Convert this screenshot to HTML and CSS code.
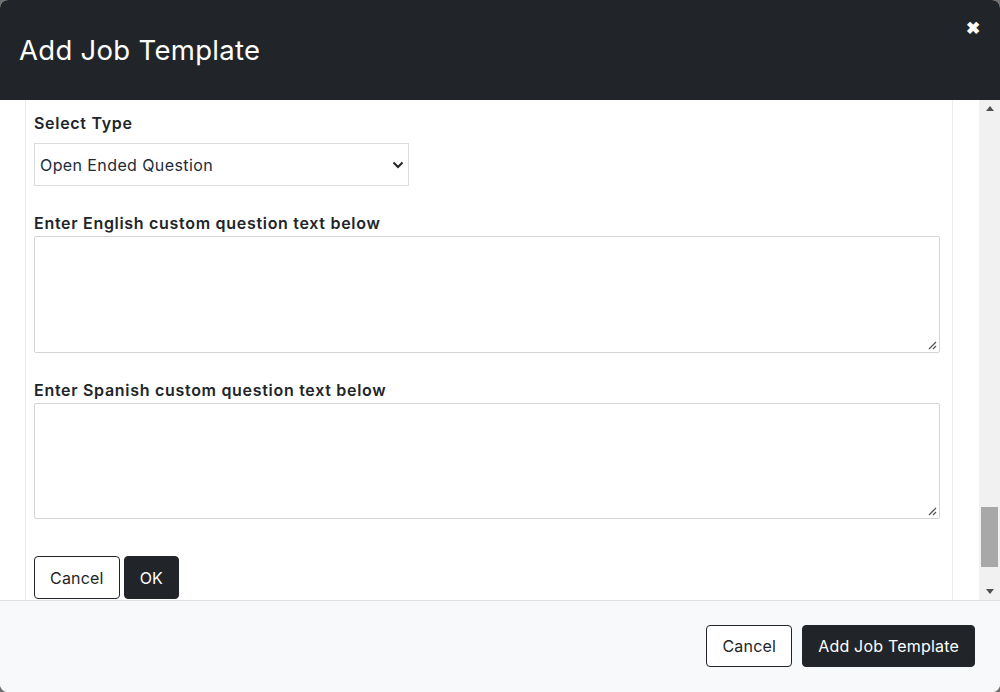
FILE: index.html
```html
<!DOCTYPE html>
<html lang="en">
<head>
    <meta charset="UTF-8">
    <title>Add Job Template</title>
    <link rel="stylesheet" href="styles.css">
</head>
<body>
    <div class="modal">
        <div class="modal-header">
            <h1 class="modal-title">Add Job Template</h1>
            <span class="close">&#10006;</span>
        </div>
        <div class="modal-body">
            <div class="scroll-area">
                <div class="question-box">
                    <label class="field-label label-select">Select Type</label>
                    <div class="select">
                        <span>Open Ended Question</span>
                        <svg class="chevron" width="12" height="8" viewBox="0 0 12 8">
                            <path d="M1.5 1.5 L6 6 L10.5 1.5" fill="none" stroke="#212529" stroke-width="2" />
                        </svg>
                    </div>

                    <label class="field-label">Enter English custom question text below</label>
                    <div class="textarea">
                        <svg class="grip" width="10" height="10" viewBox="0 0 10 10">
                            <path d="M9 2 L2 9 M9 6 L6 9" stroke="#555" stroke-width="1.3" />
                        </svg>
                    </div>

                    <label class="field-label">Enter Spanish custom question text below</label>
                    <div class="textarea textarea-last">
                        <svg class="grip" width="10" height="10" viewBox="0 0 10 10">
                            <path d="M9 2 L2 9 M9 6 L6 9" stroke="#555" stroke-width="1.3" />
                        </svg>
                    </div>

                    <div class="actions">
                        <button class="btn btn-outline">Cancel</button>
                        <button class="btn btn-dark">OK</button>
                    </div>
                </div>
            </div>
            <div class="scrollbar">
                <div class="arrow arrow-up"></div>
                <div class="track">
                    <div class="thumb"></div>
                </div>
                <div class="arrow arrow-down"></div>
            </div>
        </div>
        <div class="modal-footer">
            <button class="btn btn-outline btn-lg">Cancel</button>
            <button class="btn btn-dark btn-lg">Add Job Template</button>
        </div>
    </div>
</body>
</html>
```

FILE: styles.css
```css
html, body {
    margin: 0;
    height: 100%;
}

body {
    background: #707070;
    font-family: "Inter", "Liberation Sans", sans-serif;
    color: #212529;
}

.modal {
    height: 692px;
    display: flex;
    flex-direction: column;
    border-radius: 8px;
    overflow: hidden;
    background: #fff;
}

.modal-header {
    height: 100px;
    background: #212529;
    color: #fff;
    display: flex;
    align-items: center;
    justify-content: space-between;
    padding: 0 19px;
    box-sizing: border-box;
}

.modal-title {
    margin: 0;
    font-size: 27.5px;
    font-weight: 400;
    letter-spacing: 0.3px;
}

.close {
    font-size: 17px;
    align-self: flex-start;
    margin-top: 18px;
    margin-right: 1px;
    font-weight: bold;
}

.modal-body {
    height: 500px;
    display: flex;
}

.scroll-area {
    flex: 1;
    overflow: hidden;
}

.question-box {
    margin-left: 25px;
    width: 928px;
    height: 100%;
    box-sizing: border-box;
    border-left: 1px solid #ececec;
    border-right: 1px solid #ececec;
    padding: 13px 12px 0 8px;
}

.field-label {
    display: block;
    font-size: 16px;
    line-height: 20px;
    font-weight: 600;
    letter-spacing: 0.7px;
    margin-bottom: 3px;
    color: #212529;
}

.label-select {
    margin-bottom: 10px;
}

.select {
    width: 375px;
    height: 43px;
    box-sizing: border-box;
    border: 1px solid #dcdcdc;
    display: flex;
    align-items: center;
    justify-content: space-between;
    padding: 0 4px 0 5px;
    font-size: 16px;
    letter-spacing: 0.4px;
    color: #1c2b39;
    margin-bottom: 27px;
}

.textarea {
    height: 117px;
    box-sizing: border-box;
    border: 1px solid #d4d4d4;
    border-radius: 2px;
    display: flex;
    align-items: flex-end;
    justify-content: flex-end;
    padding: 2px;
    margin-bottom: 27px;
}

.textarea-last {
    height: 116px;
    margin-bottom: 0;
}

.actions {
    display: flex;
    gap: 4px;
    margin-top: 37px;
}

.btn {
    font-family: "Inter", "Liberation Sans", sans-serif;
    font-size: 16px;
    letter-spacing: 0.2px;
    border-radius: 4px;
    border: 1px solid #212529;
    height: 43px;
    padding: 0 15px;
    cursor: pointer;
}

.btn-outline {
    background: #fff;
    color: #212529;
}

.btn-dark {
    background: #212529;
    color: #fff;
}

.scrollbar {
    width: 21px;
    background: #f1f1f1;
    display: flex;
    flex-direction: column;
}

.arrow {
    height: 17px;
    display: flex;
    align-items: center;
    justify-content: center;
}

.arrow-up::before {
    content: "";
    border-left: 4.5px solid transparent;
    border-right: 4.5px solid transparent;
    border-bottom: 5px solid #505050;
}

.arrow-down::before {
    content: "";
    border-left: 4.5px solid transparent;
    border-right: 4.5px solid transparent;
    border-top: 5px solid #505050;
}

.track {
    flex: 1;
    display: flex;
    flex-direction: column;
    justify-content: flex-end;
    padding: 0 2px 16px;
}

.thumb {
    height: 60px;
    background: #a8a8a8;
}

.modal-footer {
    flex: 1;
    background: #f8f9fa;
    border-top: 1px solid #dee2e6;
    display: flex;
    justify-content: flex-end;
    align-items: center;
    gap: 10px;
    padding: 0 25px 2px 0;
}

.btn-lg {
    height: 42px;
}
```
